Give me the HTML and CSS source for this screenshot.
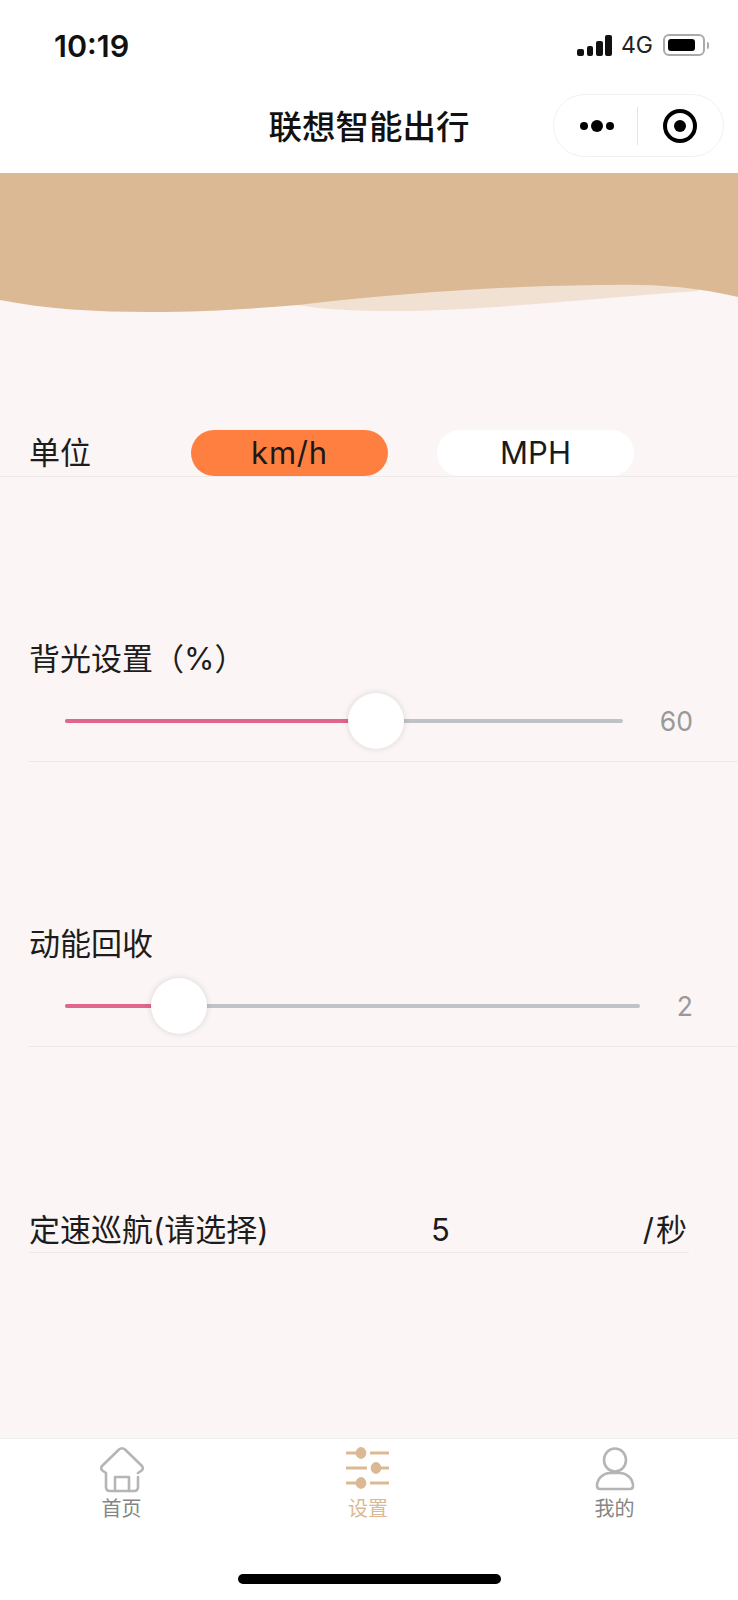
FILE: index.html
```html
<!DOCTYPE html>
<html lang="zh-CN">
<head>
  <meta charset="UTF-8" />
  <meta name="viewport" content="width=device-width, initial-scale=1.0"/>
  <title>联想智能出行</title>
  <link rel="stylesheet" href="styles.css">
</head>
<body>
  <div class="page">
    <div class="status-bar">
      <span class="time">10:19</span>
      <div class="status-icons">
        <div class="signal">
          <i class="bar-1"></i><i class="bar-2"></i><i class="bar-3"></i><i class="bar-4"></i>
        </div>
        <span class="network">4G</span>
        <div class="battery"><div class="battery-level"></div></div>
        <div class="battery-cap"></div>
      </div>
    </div>

    <div class="nav-bar">
      <h1 class="nav-title">联想智能出行</h1>
      <div class="capsule">
        <div class="capsule-dots"><i></i><i class="big"></i><i></i></div>
        <div class="capsule-line"></div>
        <div class="capsule-target"></div>
      </div>
    </div>

    <svg class="banner" viewBox="0 0 738 146" preserveAspectRatio="none">
      <rect width="738" height="146" fill="#fcf5f5"/>
      <path d="M298 132 C330 138 370 138 410 138 C500 136 610 124 698 118 L698 90 L298 90 Z" fill="#f0e1d3"/>
      <path d="M0 127 C45 136 95 139 150 139 C205 139 250 136 298 132 C400 120 520 112 610 112 C650 111 690 113 738 124 L738 0 L0 0 Z" fill="#dbb994"/>
    </svg>

    <main class="settings">
      <section class="row unit-row">
        <span class="label unit-label">单位</span>
        <div class="unit-options">
          <div class="pill pill-active">km/h</div>
          <div class="pill">MPH</div>
        </div>
      </section>

      <section class="block block-light">
        <div class="label">背光设置（%）</div>
        <div class="slider">
          <div class="track track-short">
            <div class="fill" style="width: 55.8%"><div class="thumb"></div></div>
          </div>
          <span class="slider-value">60</span>
        </div>
      </section>

      <section class="block block-regen">
        <div class="label">动能回收</div>
        <div class="slider">
          <div class="track">
            <div class="fill" style="width: 19.9%"><div class="thumb"></div></div>
          </div>
          <span class="slider-value">2</span>
        </div>
      </section>

      <section class="cruise">
        <span class="label cruise-label">定速巡航(请选择)</span>
        <span class="label cruise-value">5</span>
        <span class="label cruise-unit">/秒</span>
      </section>
    </main>

    <nav class="tab-bar">
      <a class="tab">
        <svg class="tab-icon" viewBox="0 0 46 48" fill="none" stroke="#b5b5b5" stroke-width="2.6" stroke-linejoin="round" stroke-linecap="round">
          <path d="M7 27 L4 25 Q1 23 3 20 L20 3.5 Q23 1 26 3.5 L43 20 Q45 23 42 25 L39 27 M39 31 L39 41 Q39 45 35 45 L11 45 Q7 45 7 41 L7 27"/>
          <path d="M16 45 L16 31 L30 31 L30 45"/>
        </svg>
        <span class="tab-text">首页</span>
      </a>
      <a class="tab tab-active">
        <svg class="tab-icon" viewBox="0 0 46 48" fill="#dbb994" stroke="#dbb994" stroke-width="2.8">
          <path d="M1 7 L16 7 M25 7 L44 7 M1 22 L22 22 M31 22 L44 22 M1 37 L16 37 M25 37 L44 37" fill="none"/>
          <ellipse cx="16" cy="7" rx="4" ry="4.5"/>
          <ellipse cx="31" cy="22" rx="4" ry="4.5"/>
          <ellipse cx="16" cy="37" rx="4" ry="4.5"/>
        </svg>
        <span class="tab-text">设置</span>
      </a>
      <a class="tab">
        <svg class="tab-icon" viewBox="0 0 46 48" fill="none" stroke="#b5b5b5" stroke-width="2.6">
          <ellipse cx="23" cy="14" rx="11" ry="11.5"/>
          <path d="M8 43 Q5 43 5 40 C5 32 12 27 18 27 L28 27 C34 27 41 32 41 40 Q41 43 38 43 Z"/>
        </svg>
        <span class="tab-text">我的</span>
      </a>
    </nav>

    <div class="home-area"><div class="home-bar"></div></div>
  </div>
</body>
</html>
```

FILE: styles.css
```css
* {
  box-sizing: border-box;
}
body {
  margin: 0;
  font-family: Inter, "Noto Sans CJK SC", sans-serif;
  color: #1a1a1a;
  background-color: #fff;
}
.page {
  display: flex;
  flex-direction: column;
  height: 1600px;
  overflow: hidden;
}

/* status bar */
.status-bar {
  display: flex;
  justify-content: space-between;
  align-items: center;
  height: 90px;
  padding: 0 29px 0 54px;
}
.time {
  font-size: 30.5px;
  font-weight: 600;
  color: #111;
}
.status-icons {
  display: flex;
  align-items: center;
}
.signal {
  display: flex;
  align-items: flex-end;
  gap: 2.5px;
  height: 21px;
  margin-right: 9px;
}
.signal i {
  width: 6.75px;
  background: #111;
  border-radius: 2px;
}
.bar-1 { height: 7px; }
.bar-2 { height: 10px; }
.bar-3 { height: 15px; }
.bar-4 { height: 21px; }
.network {
  font-size: 23px;
  margin-right: 10px;
  color: #222;
}
.battery {
  width: 42px;
  height: 22px;
  padding: 3px;
  border: 2px solid #aaa;
  border-radius: 6px;
}
.battery-level {
  width: 27px;
  height: 100%;
  background: #000;
  border-radius: 3px;
}
.battery-cap {
  width: 2px;
  height: 7px;
  margin-left: 2px;
  background: #aaa;
  border-radius: 0 2px 2px 0;
}

/* nav bar */
.nav-bar {
  position: relative;
  display: flex;
  justify-content: center;
  align-items: center;
  height: 83px;
  padding-bottom: 14px;
}
.nav-title {
  margin: 0;
  font-size: 33.5px;
  font-weight: 500;
  color: #111;
}
.capsule {
  position: absolute;
  top: 4px;
  left: 553px;
  display: flex;
  align-items: center;
  width: 171px;
  height: 63px;
  border: 1px solid #f1f1f1;
  border-radius: 32px;
}
.capsule-dots {
  display: flex;
  align-items: center;
  gap: 3px;
  margin-left: 26px;
}
.capsule-dots i {
  width: 8px;
  height: 8px;
  background: #000;
  border-radius: 50%;
}
.capsule-dots i.big {
  width: 12px;
  height: 12px;
}
.capsule-line {
  width: 1px;
  height: 38px;
  margin-left: 23px;
  background: #e4e4e4;
}
.capsule-target {
  position: relative;
  width: 34px;
  height: 34px;
  margin-left: 25px;
  border: 4px solid #000;
  border-radius: 50%;
}
.capsule-target::after {
  content: "";
  position: absolute;
  top: 7px;
  left: 7px;
  width: 12px;
  height: 12px;
  background: #000;
  border-radius: 50%;
}

/* banner wave */
.banner {
  display: block;
  flex: none;
  width: 100%;
  height: 146px;
}

/* settings */
.settings {
  flex: 1;
  background-color: #fcf5f5;
  padding-top: 111px;
}
.label {
  font-size: 31px;
  line-height: 40px;
  color: #1c1c1c;
}
.row {
  display: flex;
  align-items: center;
  height: 47px;
  padding-left: 29px;
  border-bottom: 1px solid #efeaea;
}
.unit-label {
  width: 162px;
  flex: none;
}
.unit-options {
  display: flex;
  gap: 49px;
}
.pill {
  width: 197px;
  height: 46px;
  font-size: 31px;
  line-height: 46px;
  text-align: center;
  background: #fff;
  border-radius: 23px;
}
.pill-active {
  letter-spacing: 0.8px;
  background: #ff7f41;
}
.block {
  margin-left: 28px;
  padding-left: 1px;
  border-bottom: 1px solid #efeaea;
}
.block-light {
  margin-top: 162px;
}
.block-regen {
  margin-top: 162px;
}
.slider {
  display: flex;
  align-items: center;
  height: 56px;
  margin-top: 14px;
  margin-bottom: 12px;
  padding-left: 36px;
}
.track {
  width: 575px;
  height: 4px;
  background: #bfc3c6;
  border-radius: 2px;
}
.track-short {
  width: 558px;
}
.fill {
  position: relative;
  height: 100%;
  background: #e0658f;
  border-radius: 2px;
}
.thumb {
  position: absolute;
  top: -26px;
  right: -28px;
  width: 56px;
  height: 56px;
  background: #fff;
  border-radius: 50%;
  box-shadow: 0 0 6px rgba(0, 0, 0, 0.14);
}
.slider-value {
  flex: 1;
  padding-right: 45px;
  font-size: 26.5px;
  text-align: right;
  color: #999;
}
.cruise {
  display: flex;
  align-items: center;
  width: 660px;
  height: 46px;
  margin: 160px 0 0 29px;
  border-bottom: 1px solid #efeaea;
}
.cruise-label {
  width: 402px;
}
.cruise-unit {
  margin-left: auto;
  letter-spacing: 2px;
}

/* tab bar */
.tab-bar {
  display: flex;
  justify-content: center;
  height: 108px;
  padding: 7px 2px 0 0;
  background: #fff;
  border-top: 1px solid #efefef;
}
.tab {
  display: flex;
  flex: 0 0 246.5px;
  flex-direction: column;
  align-items: center;
}
.tab-icon {
  width: 46px;
  height: 48px;
}
.tab-text {
  margin-top: 2px;
  font-size: 20px;
  line-height: 26px;
  color: #858585;
}
.tab-active .tab-text {
  color: #dbb994;
}
.home-area {
  display: flex;
  justify-content: center;
  height: 54px;
  padding-top: 28px;
}
.home-bar {
  width: 263px;
  height: 10px;
  background: #000;
  border-radius: 5px;
}
```
